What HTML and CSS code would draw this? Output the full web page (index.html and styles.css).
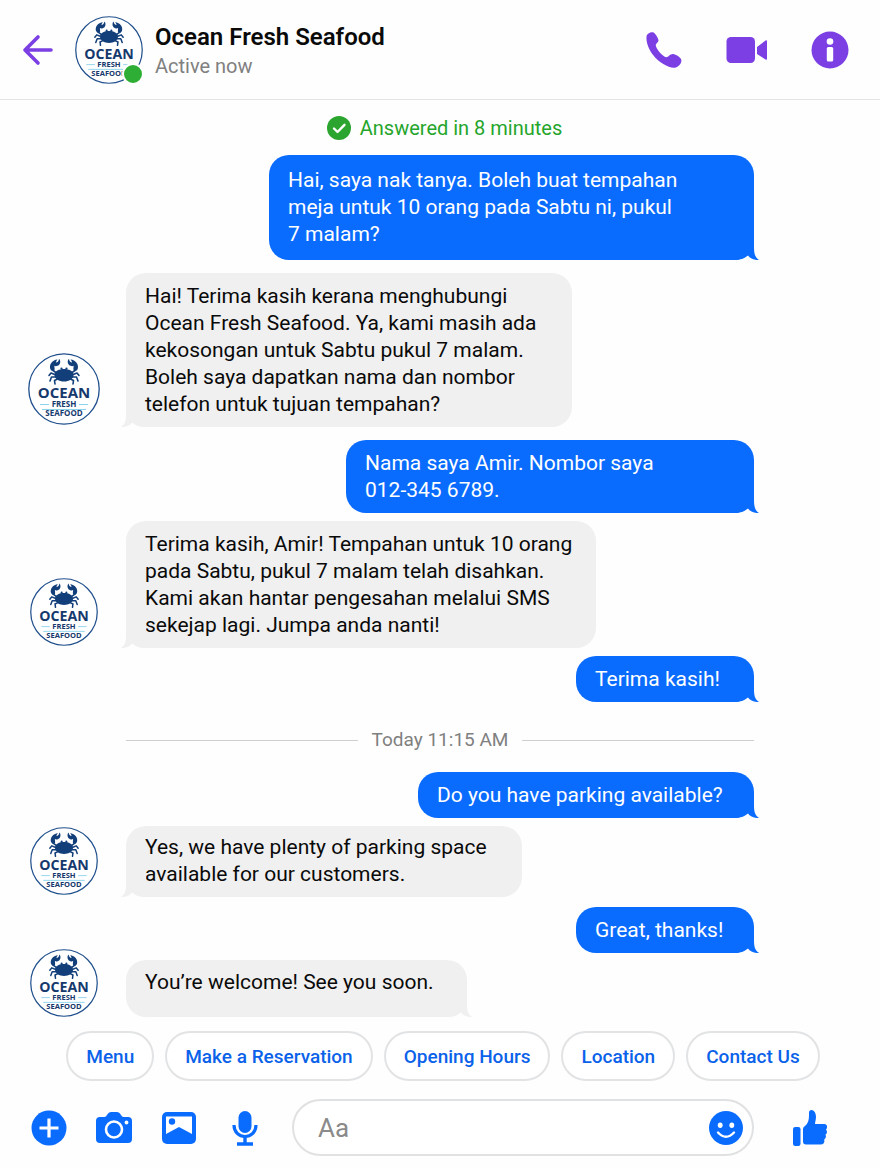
FILE: index.html
```html
<!DOCTYPE html>
<html lang="ms">
<head>
<meta charset="utf-8">
<meta name="viewport" content="width=device-width, initial-scale=1">
<title>Ocean Fresh Seafood</title>
<link rel="stylesheet" href="styles.css">
</head>
<body>
<svg class="sprite" aria-hidden="true">
  <symbol id="logo" viewBox="0 0 72 72">
    <circle cx="36" cy="36" r="35.2" fill="#fff" stroke="#1f4f8c" stroke-width="1.3"/>
    <g fill="#123f7a">
      <path d="M26.500 22C26.500 18 31 16 36 16S45.500 18 45.500 22C45.500 26 41 28.500 36 28.500S26.500 26 26.500 22Z"/>
      <path d="M29.500 6.500C24.500 6.800 20.800 11.500 22.300 16C23.500 18.500 26 18.500 26.500 16.800C27 15 26 14 26.500 12.800C27.300 13.600 29.500 13.300 31.200 11.800C32.800 10 32.600 7 31 5.800C31 8 29.500 9.500 28 9.500C28 8.500 28.500 7.500 29.500 6.500Z"/>
      <path d="M42.500 6.500C47.500 6.800 51.200 11.500 49.700 16C48.500 18.500 46 18.500 45.500 16.800C45 15 46 14 45.500 12.800C44.700 13.600 42.500 13.300 40.800 11.800C39.200 10 39.400 7 41 5.800C41 8 42.500 9.500 44 9.500C44 8.500 43.500 7.500 42.500 6.500Z"/>
      <circle cx="33.500" cy="15.500" r="1.100"/><circle cx="38.500" cy="15.500" r="1.100"/>
    </g>
    <path d="M24.500 17L28.500 20M47.500 17L43.500 20M28 22L23 20L21 22.500M44 22L49 20L51 22.500M28 24L23.500 24L22 28M44 24L48.500 24L50 28M29.500 26L26.500 27.500L27 31M42.500 26L45.500 27.500L45 31" fill="none" stroke="#123f7a" stroke-width="1.600" stroke-linecap="round" stroke-linejoin="round"/>
    <path d="M12 51.500H21M51 51.500H60M14 56.500H58" stroke="#8ed3ec" stroke-width="1"/>
    <text class="logo-name" x="36" y="45">OCEAN</text>
    <text class="logo-sub" x="36" y="54">FRESH</text>
    <text class="logo-sub" x="36" y="63">SEAFOOD</text>
  </symbol>
  <symbol id="tail" viewBox="0 0 26 22">
    <path d="M0 22L0 0H20V8C20 15 20.500 19 25 22C20 22.300 16 20.500 14 17.500C10 20.500 7 22 0 22Z"/>
  </symbol>
</svg>

<div class="app">
  <header class="header">
    <button class="icon-btn back" aria-label="Back">
      <svg width="32" height="32" viewBox="0 0 32 32" fill="none" stroke="currentColor" stroke-width="3.600" stroke-linecap="round" stroke-linejoin="round"><path d="M30 16H4M17 3L4 16L17 29"/></svg>
    </button>
    <div class="profile">
      <svg class="avatar" role="img" aria-label="Ocean Fresh Seafood"><use href="#logo"/></svg>
      <span class="online"></span>
    </div>
    <div class="who">
      <h1>Ocean Fresh Seafood</h1>
      <p>Active now</p>
    </div>
    <nav class="actions" aria-label="Call actions">
      <button class="icon-btn" aria-label="Call">
        <svg width="38" height="38" viewBox="0 0 38 38" fill="currentColor"><path d="M1.500 5.500C1.800 2.500 5.500 .8 7.800 1.200C10 1.600 12.800 6.200 13.500 9.200C13.700 10.800 10.800 12.500 10.700 14C10.800 17.500 17.500 25.500 21.300 26.300C23.500 26 25 22.800 28 23C31 23.500 35.300 26 36.200 28.500C37.200 31.500 34 36 30 36.700C24 37.500 14 31.500 8.500 24.500C3.500 18.500 1 11 1.500 5.500Z"/></svg>
      </button>
      <button class="icon-btn" aria-label="Video call">
        <svg width="42" height="38" viewBox="0 0 42 38" fill="currentColor"><rect x="0.500" y="6" width="28.500" height="26" rx="4.500"/><path d="M31 16L39.500 9.500Q41 8.800 41 10.500V27.500Q41 29.200 39.500 28.500L31 23Z"/></svg>
      </button>
      <button class="icon-btn" aria-label="Information">
        <svg width="38" height="38" viewBox="0 0 38 38"><circle cx="19" cy="19" r="18.500" fill="currentColor"/><circle cx="19" cy="10.500" r="3.300" fill="#fff"/><rect x="15.800" y="16" width="6.400" height="14.500" rx="1.500" fill="#fff"/></svg>
      </button>
    </nav>
  </header>

  <main class="chat">
    <p class="answered">
      <svg width="24" height="24" viewBox="0 0 24 24"><circle cx="12" cy="12" r="12" fill="#2ba52f"/><path d="M7 12.500L10.500 16L17.500 8.800" fill="none" stroke="#fff" stroke-width="2.400" stroke-linecap="round" stroke-linejoin="round"/></svg>
      Answered in 8 minutes
    </p>

    <div class="row out">
      <p class="bubble tall w-485">Hai, saya nak tanya. Boleh buat tempahan<br>meja untuk 10 orang pada Sabtu ni, pukul<br>7 malam?<svg class="tail"><use href="#tail"/></svg></p>
    </div>
    <div class="row in apart">
      <svg class="avatar large" role="img" aria-label="Ocean Fresh Seafood"><use href="#logo"/></svg>
      <p class="bubble w-446">Hai! Terima kasih kerana menghubungi<br>Ocean Fresh Seafood. Ya, kami masih ada<br>kekosongan untuk Sabtu pukul 7 malam.<br>Boleh saya dapatkan nama dan nombor<br>telefon untuk tujuan tempahan?<svg class="tail"><use href="#tail"/></svg></p>
    </div>
    <div class="row out apart">
      <p class="bubble w-408">Nama saya Amir. Nombor saya<br>012-345 6789.<svg class="tail"><use href="#tail"/></svg></p>
    </div>
    <div class="row in near">
      <svg class="avatar" role="img" aria-label="Ocean Fresh Seafood"><use href="#logo"/></svg>
      <p class="bubble w-470">Terima kasih, Amir! Tempahan untuk 10 orang<br>pada Sabtu, pukul 7 malam telah disahkan.<br>Kami akan hantar pengesahan melalui SMS<br>sekejap lagi. Jumpa anda nanti!<svg class="tail"><use href="#tail"/></svg></p>
    </div>
    <div class="row out near">
      <p class="bubble w-178">Terima kasih!<svg class="tail"><use href="#tail"/></svg></p>
    </div>

    <div class="divider"><span>Today 11:15 AM</span></div>

    <div class="row out">
      <p class="bubble w-336">Do you have parking available?<svg class="tail"><use href="#tail"/></svg></p>
    </div>
    <div class="row in near">
      <svg class="avatar" role="img" aria-label="Ocean Fresh Seafood"><use href="#logo"/></svg>
      <p class="bubble snug w-396">Yes, we have plenty of parking space<br>available for our customers.<svg class="tail"><use href="#tail"/></svg></p>
    </div>
    <div class="row out mid">
      <p class="bubble w-178">Great, thanks!<svg class="tail"><use href="#tail"/></svg></p>
    </div>
    <div class="row in last">
      <svg class="avatar" role="img" aria-label="Ocean Fresh Seafood"><use href="#logo"/></svg>
      <p class="bubble w-341">You’re welcome! See you soon.<svg class="tail"><use href="#tail"/></svg></p>
    </div>
  </main>

  <footer>
    <div class="chips">
      <button>Menu</button>
      <button>Make a Reservation</button>
      <button>Opening Hours</button>
      <button>Location</button>
      <button>Contact Us</button>
    </div>
    <form class="composer">
      <div class="tools">
        <button type="button" class="icon-btn" aria-label="More">
          <svg width="36" height="36" viewBox="0 0 36 36"><circle cx="18" cy="18" r="17.500" fill="currentColor"/><path d="M18 8.500V27.500M8.500 18H27.500" stroke="#fff" stroke-width="3.200"/></svg>
        </button>
        <button type="button" class="icon-btn" aria-label="Camera">
          <svg width="38" height="36" viewBox="0 0 38 36"><path d="M5 7H9.500Q11 7 12 5L13 3.500Q14 2 16 2H22Q24 2 25 3.500L26 5Q27 7 28.500 7H33Q37 7 37 11V29Q37 33 33 33H5Q1 33 1 29V11Q1 7 5 7Z" fill="currentColor"/><circle cx="19" cy="19.500" r="8" fill="none" stroke="#fff" stroke-width="2.600"/><circle cx="31.500" cy="12.500" r="1.900" fill="#fff"/></svg>
        </button>
        <button type="button" class="icon-btn" aria-label="Photo">
          <svg width="36" height="36" viewBox="0 0 36 36"><rect x="1" y="2" width="34" height="32" rx="5" fill="currentColor"/><path d="M5 6.500H31V24L18 17L5 24Z" fill="#fff"/><circle cx="11" cy="11.500" r="3.200" fill="currentColor"/></svg>
        </button>
        <button type="button" class="icon-btn voice" aria-label="Voice">
          <svg width="28" height="36" viewBox="0 0 28 36"><rect x="7.500" y="1" width="13" height="22" rx="6.500" fill="currentColor"/><path d="M3 15C3 22 8 26.500 14 26.500S25 22 25 15" fill="none" stroke="currentColor" stroke-width="3.200"/><path d="M14 26.500V33M6 34H22" stroke="currentColor" stroke-width="3.400"/></svg>
        </button>
      </div>
      <div class="field">
        <input type="text" placeholder="Aa" aria-label="Message">
        <button type="button" class="icon-btn" aria-label="Emoji">
          <svg width="34" height="34" viewBox="0 0 34 34"><circle cx="17" cy="17" r="17" fill="currentColor"/><ellipse cx="11.200" cy="14.300" rx="2.400" ry="2.700" fill="#fff"/><ellipse cx="22.800" cy="14.300" rx="2.400" ry="2.700" fill="#fff"/><path d="M9 21.500Q17 30 25 21.500" fill="none" stroke="#fff" stroke-width="2.400" stroke-linecap="round"/></svg>
        </button>
      </div>
      <button type="button" class="icon-btn like" aria-label="Like">
        <svg width="36" height="38" viewBox="0 0 36 38" fill="currentColor"><rect x="1" y="18" width="7.500" height="19" rx="2.200"/><path d="M11 20Q11 18 13 17C16 14.500 17 11 17 6.500V3.500Q17 1 19.500 1C22 1 24 4 24 8C24 10.500 23 13 23 15H32Q35.500 15.300 35 18.500Q34.800 20 34 20.500Q35.500 22 34.800 24Q34.500 25 33.500 25.500Q34.500 27.500 33.500 29Q33 30 32.300 30.300Q33 35.500 28.500 35.500H14Q11 35.500 11 32.500Z"/></svg>
      </button>
    </form>
  </footer>
</div>
</body>
</html>
```
FILE: styles.css
```css
* {
  box-sizing: border-box;
}

body {
  margin: 0;
  background: #fefefe;
  color: #0a0a0a;
  font-family: Roboto, "Liberation Sans", sans-serif;
}

h1,
p {
  margin: 0;
}

button {
  font: inherit;
  cursor: pointer;
}

.sprite {
  position: absolute;
  width: 0;
  height: 0;
  overflow: visible;
}

.logo-name,
.logo-sub {
  fill: #16396d;
  font-family: "Open Sans", sans-serif;
  font-weight: 700;
  text-anchor: middle;
}

.logo-name {
  font-size: 15px;
}

.logo-sub {
  font-size: 8px;
}

.app {
  display: flex;
  flex-direction: column;
  min-height: 100vh;
}

.icon-btn {
  display: flex;
  flex: none;
  padding: 0;
  border: 0;
  background: none;
  color: inherit;
}

/* Header */
.header {
  display: flex;
  align-items: center;
  height: 100px;
  padding: 0 31px 0 21px;
  border-bottom: 1px solid #e2e4e6;
  color: #7b3fe4;
}

.profile {
  position: relative;
  display: flex;
  margin: 0 12px 0 22px;
}

.avatar {
  flex: none;
  width: 68px;
  height: 68px;
}

.online {
  position: absolute;
  right: -1px;
  bottom: -1px;
  width: 22px;
  height: 22px;
  border: 2px solid #fff;
  border-radius: 50%;
  background: #2eae34;
}

.who {
  flex: 1;
  padding-top: 2px;
}

.who h1 {
  color: #0a0a0a;
  font-size: 24px;
  font-weight: 600;
  line-height: 30px;
}

.who p {
  color: #808080;
  font-size: 20px;
  line-height: 28px;
}

.actions {
  display: flex;
  align-items: center;
  gap: 43px;
}

/* Conversation */
.chat {
  display: flex;
  flex: 1;
  flex-direction: column;
  padding: 14px 126px 14px 28px;
}

.answered {
  display: flex;
  align-items: center;
  justify-content: center;
  gap: 9px;
  margin: 0 0 13px 98px;
  padding-left: 9px;
  color: #25a52b;
  font-size: 20px;
  line-height: 28px;
}

.row {
  display: flex;
  align-items: flex-end;
}

.row.out {
  justify-content: flex-end;
}

.row.in {
  display: grid;
  grid-template-columns: 72px minmax(0, 1fr);
  column-gap: 26px;
  justify-items: start;
}

.row .avatar {
  justify-self: center;
  margin-bottom: 2px;
}

.row .avatar.large {
  width: 72px;
  height: 72px;
}

.apart {
  margin-top: 13px;
}

.near {
  margin-top: 8px;
}

.mid {
  margin-top: 10px;
}

.row.last {
  margin-top: -4px;
}

.row.last .avatar {
  margin-bottom: 0;
}

.bubble {
  position: relative;
  max-width: 100%;
  padding: 10px 0 9px 19px;
  border-radius: 20px;
  font-size: 21px;
  line-height: 27px;
}

.out .bubble {
  background: #0a6cff;
  color: #fff;
}

.in .bubble {
  background: #f0f0f0;
}

.out .tall {
  padding: 12px 0 12px 19px;
}

.in .snug {
  padding: 8px 0 9px 19px;
}

.in.last .bubble {
  padding: 9px 0 21px 19px;
}

.w-178 { width: 178px; }
.w-336 { width: 336px; }
.w-341 { width: 341px; }
.w-396 { width: 396px; }
.w-408 { width: 408px; }
.w-446 { width: 446px; }
.w-470 { width: 470px; }
.w-485 { width: 485px; }

.tail {
  position: absolute;
  right: -6px;
  bottom: 0;
  width: 26px;
  height: 22px;
  fill: #0a6cff;
}

.in .tail {
  right: auto;
  left: -6px;
  fill: #f0f0f0;
  transform: scaleX(-1);
}

.in.last .tail {
  right: -6px;
  left: auto;
  transform: none;
}

.divider {
  display: flex;
  align-items: center;
  gap: 14px;
  margin: 24px 0 18px 98px;
  color: #808080;
  font-size: 19px;
  line-height: 28px;
}

.divider::before,
.divider::after {
  content: "";
  flex: 1;
  height: 1px;
  background: #cfcfcf;
}

/* Quick replies */
.chips {
  display: flex;
  flex-wrap: wrap;
  justify-content: center;
  gap: 11px;
  padding: 0 46px 0 52px;
}

.chips button {
  height: 50px;
  padding: 0 18px;
  border: 2px solid #e2e3e5;
  border-radius: 25px;
  background: #fff;
  color: #0b62ea;
  font-size: 19px;
  font-weight: 500;
}

/* Composer */
.composer {
  display: flex;
  align-items: center;
  padding: 18px 52px 12px 31px;
  color: #0a6cff;
}

.tools {
  display: flex;
  align-items: center;
  gap: 28px;
}

.voice {
  padding-left: 6px;
}

.field {
  display: flex;
  flex: 1;
  align-items: center;
  min-width: 0;
  height: 57px;
  margin: 0 38px 0 33px;
  padding: 0 9px 0 24px;
  border: 2px solid #e0e1e3;
  border-radius: 29px;
  background: #fff;
}

.field input {
  flex: 1;
  min-width: 0;
  padding: 0;
  border: 0;
  outline: 0;
  background: none;
  color: #0a0a0a;
  font: 26px Roboto, "Liberation Sans", sans-serif;
}

.field input::placeholder {
  color: #8a8a8a;
  opacity: 1;
}
```
